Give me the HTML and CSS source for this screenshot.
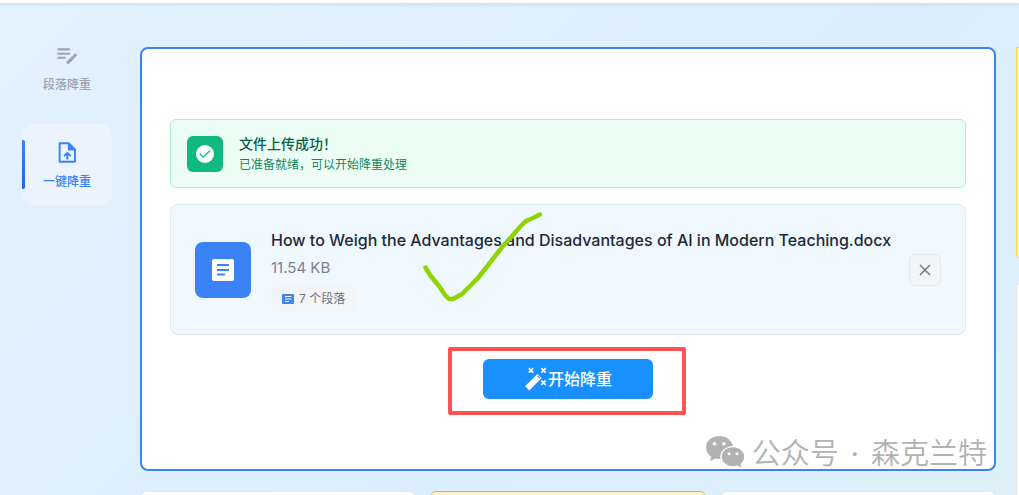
FILE: index.html
```html
<!DOCTYPE html>
<html lang="zh-CN">
<head>
<meta charset="utf-8">
<meta name="viewport" content="width=device-width, initial-scale=1">
<title>一键降重</title>
<link rel="stylesheet" href="styles.css">
</head>
<body>
<div class="app">
  <header class="topbar"></header>
  <div class="layout">
    <nav class="sidebar">
      <button class="nav-item" type="button">
        <svg class="nav-icon" viewBox="0 0 24 24" fill="none" stroke="currentColor" stroke-width="2.400" stroke-linecap="round"><path d="M1.500 5H14M1.500 10H14M1.500 14.500H9"/><path d="M11.500 21 19 13.500" stroke-width="3.800" stroke-linecap="butt"/><path d="M20 12.500 21 11.500" stroke-width="3.400"/></svg>
        <span>段落降重</span>
      </button>
      <button class="nav-item nav-active" type="button" aria-current="page">
        <svg class="nav-icon" viewBox="0 0 24 24" fill="none" stroke="currentColor" stroke-width="2.200" stroke-linejoin="round"><path d="M3 1.500H13.500L20.500 8.500V22.500H3Z"/><path d="M13.500 2V8.500H20Z" fill="currentColor"/><path d="M11.800 20V14.500M8 16 11.800 12.500 15.600 16"/></svg>
        <span>一键降重</span>
      </button>
    </nav>
    <main class="content">
      <section class="upload">
        <div class="notice" role="status">
          <span class="notice-icon"><svg viewBox="0 0 20 20" width="20" height="20"><circle cx="10" cy="10" r="9" fill="#fff"/><path d="M4.800 9.800 8.300 13.200 15 6.500" fill="none" stroke="#10b981" stroke-width="1.300"/></svg></span>
          <div>
            <p class="notice-title">文件上传成功！</p>
            <p class="notice-text">已准备就绪，可以开始降重处理</p>
          </div>
        </div>
        <div class="file">
          <span class="file-icon"><svg viewBox="0 0 24 24" width="24" height="24"><rect x="1" y="1" width="22" height="22" rx="2" fill="#fff"/><path d="M6 7H18M6 12H18M6 16.500H14" stroke="#3b82f6" stroke-width="2"/></svg></span>
          <div class="file-info">
            <h1 class="file-name">How to Weigh the Advantages and Disadvantages of AI in Modern Teaching.docx</h1>
            <p class="file-size">11.54 KB</p>
            <span class="file-tag"><svg viewBox="0 0 12 12" width="12" height="12"><rect x="0" y="1" width="12" height="10" rx="1" fill="#3b82f6"/><path d="M3 3.500H9.500M3 6H9.500M3 8.500H7" stroke="#fff"/></svg>7 个段落</span>
          </div>
          <button class="remove" type="button" aria-label="移除文件"><svg viewBox="0 0 12 12" width="12" height="12"><path d="M1 1 11 11M11 1 1 11" stroke="#6b7280" stroke-width="1.400"/></svg></button>
          <svg class="tick" viewBox="0 0 120 90" width="120" height="90" fill="none" stroke="#8fd400" stroke-width="4.500" stroke-linecap="round" stroke-linejoin="round"><path d="M3.500 55.500 8 63 17 74 23 83 27 87H31L40 82 56 66 81 34 91 23 98 15 104 9 111 6 118 2.500"/></svg>
        </div>
        <div class="action">
          <button class="start" type="button">
            <svg viewBox="0 0 24 24" width="24" height="24" fill="none" stroke="#fff"><path d="M3.200 21.300 15.500 9" stroke-width="6"/><path d="M13.600 8.800 15.900 11.100" stroke="#1890ff" stroke-width="1.200"/><path d="M4.800 1.200 9.200 5.600M9.200 1.200 4.800 5.600M17.300 1.200 21.700 5.600M21.700 1.200 17.300 5.600M17.300 13.500 21.700 17.900M21.700 13.500 17.300 17.900" stroke-width="1.700"/></svg>
            <span>开始降重</span>
          </button>
        </div>
        <div class="watermark">
          <svg viewBox="0 0 40 34" width="40" height="34"><path fill="#b2b2b2" d="M14 1C6.500 1 1 6 1 12.500 1 16.500 3 19.700 6.200 21.800L5 26.200 10.200 23.500C11.600 23.900 14 24.100 15.500 23.900 14 17 20 11.300 28 11 26.500 5 21 1 14 1Z"/><path fill="#b2b2b2" d="M28 12.300C21.500 12.300 16.700 16.500 16.700 21.800 16.700 27.200 21.500 31.200 28 31.200 29.500 31.200 31 31 32.300 30.500L36.500 32.700 35.500 29C37.900 27.200 39.200 24.600 39.200 21.800 39.200 16.500 34.300 12.300 28 12.300Z"/><g fill="#fff"><circle cx="9.500" cy="8.800" r="1.800"/><circle cx="19" cy="8.800" r="1.800"/><circle cx="24" cy="18.700" r="1.500"/><circle cx="32" cy="18.700" r="1.500"/></g></svg>
          <span class="watermark-text"><span>公众号</span><b class="watermark-dot">·</b><span>森克兰特</span></span>
        </div>
      </section>
      <div class="plans">
        <div class="plan"></div>
        <div class="plan plan-featured"></div>
        <div class="plan"></div>
      </div>
    </main>
    <aside class="rail">
      <div class="rail-card rail-gold"></div>
      <div class="rail-card"></div>
    </aside>
  </div>
</div>
</body>
</html>
```
FILE: styles.css
```css
* { box-sizing: border-box; }

body {
  margin: 0;
  font-family: Inter, "Noto Sans CJK SC", sans-serif;
}

button {
  border: 0;
  margin: 0;
  padding: 0;
  font: inherit;
  cursor: pointer;
}

h1, p { margin: 0; }

svg { display: block; flex: none; }

.app {
  display: flex;
  flex-direction: column;
  height: 100vh;
  overflow: hidden;
  background: linear-gradient(135deg, #e3f1fe 0%, #dceefd 60%, #def1fa 100%);
}

.topbar {
  flex: none;
  height: 3px;
  background: #fff;
  box-shadow: 0 1px 4px rgba(30, 60, 100, 0.15);
}

.layout {
  flex: 1;
  min-height: 0;
  display: grid;
  grid-template-columns: 112px minmax(0, 1fr) 3px;
  padding-top: 44px;
}

.sidebar {
  display: flex;
  flex-direction: column;
  gap: 16px;
  margin-top: -20px;
  padding-left: 22px;
}

.nav-item {
  position: relative;
  display: flex;
  flex-direction: column;
  align-items: center;
  gap: 10px;
  padding: 18px 0 14px;
  border-radius: 12px;
  background: transparent;
  color: #9ca3af;
  font-size: 12px;
  line-height: 18px;
  font-weight: 500;
}

.nav-icon { width: 21px; height: 21px; }

.nav-active {
  background: #eaf3fe;
  color: #3b82f6;
}

.nav-active::before {
  content: "";
  position: absolute;
  left: 0;
  top: 16px;
  bottom: 16px;
  width: 3px;
  border-radius: 0 2px 2px 0;
  background: linear-gradient(#3b82f6, #2563eb);
}

.content {
  display: flex;
  flex-direction: column;
  gap: 20px;
  padding: 0 20px 0 28px;
}

.upload {
  position: relative;
  flex: none;
  display: flex;
  flex-direction: column;
  padding: 70px 28px;
  border: 2px solid #3b82f6;
  border-radius: 8px;
  background: #fff;
}

.notice {
  display: flex;
  align-items: center;
  gap: 16px;
  padding: 13px 16px;
  border: 1px solid #a7f3d0;
  border-radius: 6px;
  background: #ecfdf5;
}

.notice-icon {
  display: grid;
  place-items: center;
  width: 36px;
  height: 36px;
  border-radius: 6px;
  background: #10b981;
}

.notice-title {
  color: #065f46;
  font-size: 14px;
  line-height: 22px;
  font-weight: 500;
}

.notice-text {
  color: #15855f;
  font-size: 12px;
  line-height: 19px;
}

.file {
  position: relative;
  display: flex;
  align-items: center;
  gap: 20px;
  margin-top: 16px;
  padding: 23px 24px;
  border: 1px solid #dbeafe;
  border-radius: 8px;
  background: #f0f8ff;
}

.file-icon {
  display: grid;
  place-items: center;
  flex: none;
  width: 56px;
  height: 56px;
  border-radius: 8px;
  background: #3b82f6;
}

.file-info {
  flex: 1;
  min-width: 0;
}

.file-name {
  color: #1f2937;
  font-size: 16px;
  line-height: 24px;
  font-weight: 500;
  white-space: nowrap;
}

.file-size {
  margin-top: 4px;
  color: #7b8190;
  font-size: 15px;
  line-height: 24px;
}

.file-tag {
  display: flex;
  align-items: center;
  gap: 5px;
  width: fit-content;
  margin-top: 6px;
  padding: 3px 10px 3px 11px;
  border-radius: 4px;
  background: #f3f4f6;
  color: #6b7280;
  font-size: 12px;
  line-height: 19px;
}

.remove {
  display: grid;
  place-items: center;
  flex: none;
  width: 32px;
  height: 32px;
  border: 1px solid #e5e7eb;
  border-radius: 6px;
  background: #f3f4f6;
}

.tick {
  position: absolute;
  left: 251px;
  top: 7px;
  pointer-events: none;
}

.action {
  display: flex;
  justify-content: center;
  align-self: center;
  margin: 12px 2px -16px 0;
  padding: 8px 29px 12px 31px;
  border: 4px solid #ff5252;
  border-radius: 2px;
}

.start {
  display: flex;
  align-items: center;
  justify-content: center;
  width: 170px;
  height: 40px;
  border-radius: 6px;
  background: #1890ff;
  color: #fff;
  font-size: 16px;
  line-height: 24px;
  font-weight: 500;
}

.watermark {
  position: absolute;
  right: 7px;
  bottom: 0;
  display: flex;
  align-items: flex-start;
  gap: 7px;
  color: #b2b2b2;
  font-family: Roboto, "Noto Sans CJK SC", sans-serif;
  font-size: 29px;
  line-height: 36px;
  font-weight: 350;
  white-space: nowrap;
}

.watermark-text {
  display: flex;
  gap: 12px;
  padding-top: 1px;
  margin-bottom: -3px;
}

.watermark-dot { font-weight: 500; }

.plans {
  flex: none;
  display: grid;
  grid-template-columns: repeat(3, 1fr);
  gap: 15px;
}

.plan {
  height: 80px;
  border: 1px solid #e5e7eb;
  border-radius: 6px;
  background: #fff;
}

.plan-featured {
  border-color: #f0a928;
  background: #fef3c7;
}

.rail {
  display: flex;
  flex-direction: column;
  gap: 20px;
}

.rail-card {
  flex: none;
  width: 240px;
  height: 260px;
  border: 1px solid #e5e7eb;
  border-radius: 8px;
  background: #fff;
}

.rail-gold {
  height: 214px;
  border-color: #fcd34d;
  border-radius: 0 0 8px 8px;
  background: #fef3c7;
}
```
